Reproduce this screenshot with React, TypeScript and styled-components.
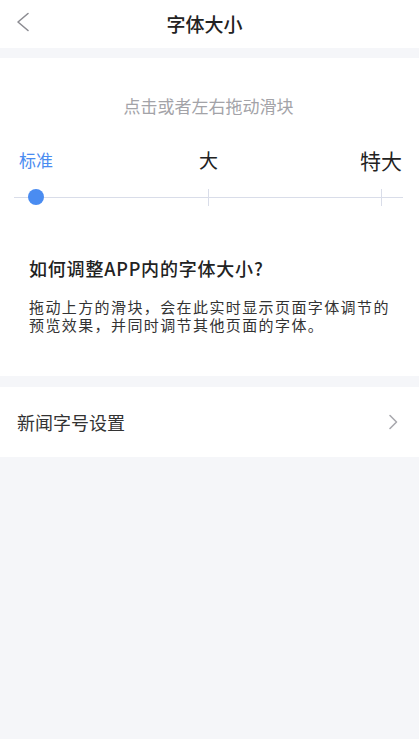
import React from "react";
import styled, { createGlobalStyle } from "styled-components";

const GlobalStyle = createGlobalStyle`
	html, body {
		margin: 0;
		padding: 0;
		background: #f5f6f9;
	}
	body {
		font-family: "Noto Sans CJK SC", "Noto Sans", sans-serif;
		-webkit-font-smoothing: antialiased;
	}
`;

const levels = [
	{ label: "标准", size: 17 },
	{ label: "大", size: 19 },
	{ label: "特大", size: 21 },
];

const BackIcon = () => (
	<svg width="14" height="20" viewBox="0 0 14 20" fill="none">
		<path
			d="M12 1.5 L2 10 L12 18.5"
			stroke="#8c8c92"
			strokeWidth="1.6"
			strokeLinecap="round"
			strokeLinejoin="round"
		/>
	</svg>
);

const ArrowIcon = () => (
	<svg width="10" height="16" viewBox="0 0 10 16" fill="none">
		<path
			d="M2 1.5 L8.5 8 L2 14.5"
			stroke="#a9a9ae"
			strokeWidth="1.6"
			strokeLinecap="round"
			strokeLinejoin="round"
		/>
	</svg>
);

export default function App() {
	const current = 0;

	return (
		<Page>
			<GlobalStyle />
			<Header>
				<BackButton aria-label="返回">
					<BackIcon />
				</BackButton>
				<Title>字体大小</Title>
			</Header>

			<Panel>
				<Hint>点击或者左右拖动滑块</Hint>
				<LabelRow>
					{levels.map((lv, i) => (
						<Label key={lv.label} $size={lv.size} $active={i === current}>
							{lv.label}
						</Label>
					))}
				</LabelRow>
				<Slider>
					{levels.map((lv, i) => (
						<Stop key={lv.label}>{i === current ? <Thumb /> : <Tick />}</Stop>
					))}
				</Slider>

				<Question>如何调整APP内的字体大小?</Question>
				<Answer>
					拖动上方的滑块，会在此实时显示页面字体调节的预览效果，并同时调节其他页面的字体。
				</Answer>
			</Panel>

			<ListRow>
				<RowText>新闻字号设置</RowText>
				<ArrowIcon />
			</ListRow>
		</Page>
	);
}

const Page = styled.div`
	display: flex;
	flex-direction: column;
	min-height: 739px;
	background: #f5f6f9;
`;

const Header = styled.header`
	position: relative;
	display: flex;
	align-items: center;
	justify-content: center;
	height: 48px;
	background: #fff;
	margin-bottom: 10px;
`;

const BackButton = styled.button`
	position: absolute;
	left: 16px;
	top: 12px;
	display: flex;
	padding: 0;
	border: 0;
	background: none;
`;

const Title = styled.h1`
	margin: 0;
	font-size: 19px;
	font-weight: 500;
	line-height: 26px;
	color: #222;
	padding-right: 10px;
`;

const Panel = styled.section`
	display: flex;
	flex-direction: column;
	background: #fff;
	padding: 36px 0 42px;
	margin-bottom: 11px;
`;

const Hint = styled.p`
	margin: 0;
	text-align: center;
	font-size: 17px;
	line-height: 24px;
	color: #a3a3a8;
	padding-right: 2px;
`;

const LabelRow = styled.div`
	display: flex;
	justify-content: space-between;
	align-items: center;
	height: 28px;
	margin-top: 28px;
	padding: 0 16px 0 14px;
`;

const Label = styled.span<{ $size: number; $active: boolean }>`
	width: 44px;
	text-align: center;
	white-space: nowrap;
	font-size: ${({ $size }) => $size}px;
	line-height: 28px;
	color: ${({ $active }) => ($active ? "#4a8cf1" : "#222")};
`;

const Slider = styled.div`
	display: flex;
	justify-content: space-between;
	height: 18px;
	margin: 14px 16px 0 14px;
	background: linear-gradient(#d9dde9, #d9dde9) center / 100% 1px no-repeat;
`;

const Stop = styled.div`
	display: flex;
	align-items: center;
	justify-content: center;
	width: 44px;
	height: 18px;
`;

const Tick = styled.span`
	width: 1px;
	height: 17px;
	background: #d9dde9;
`;

const Thumb = styled.span`
	width: 16px;
	height: 16px;
	border-radius: 50%;
	background: #4a8cf1;
`;

const Question = styled.h2`
	margin: 49px 0 0;
	padding: 0 29px;
	font-size: 18px;
	font-weight: 500;
	line-height: 26px;
	letter-spacing: 0.8px;
	color: #222;
`;

const Answer = styled.p`
	margin: 17px 0 0;
	padding: 0 16px 0 29px;
	font-size: 15px;
	line-height: 18px;
	letter-spacing: 1.4px;
	color: #333;
`;

const ListRow = styled.div`
	display: flex;
	align-items: center;
	justify-content: space-between;
	height: 70px;
	padding: 0 21px 0 17px;
	background: #fff;
`;

const RowText = styled.span`
	font-size: 18px;
	line-height: 26px;
	color: #333;
`;
